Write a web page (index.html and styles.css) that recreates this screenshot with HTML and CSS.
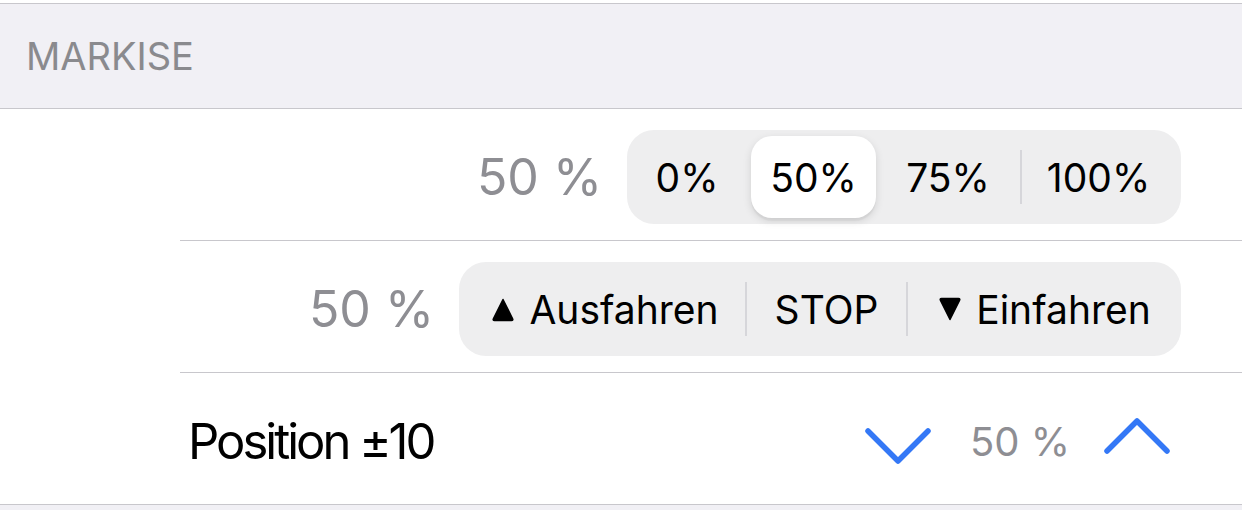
FILE: index.html
```html
<!DOCTYPE html>
<html lang="de">
<head>
<meta charset="utf-8">
<title>Markise</title>
<link rel="stylesheet" href="styles.css">
</head>
<body>
<div class="prev"></div>
<div class="section-header">MARKISE</div>
<div class="list">
  <div class="row">
    <span class="value">50 %</span>
    <div class="seg seg-pos">
      <div class="s s-first">0%</div>
      <div class="s selected">50%</div>
      <div class="s">75%</div>
      <div class="divider"></div>
      <div class="s">100%</div>
    </div>
  </div>
  <div class="row">
    <span class="value">50 %</span>
    <div class="seg seg-move">
      <div class="s"><svg class="tri" viewBox="0 0 24 25" width="24" height="25"><path d="M12 2.5 L21.5 21.5 Q22.5 23.5 20.5 23.5 L3.5 23.5 Q1.5 23.5 2.5 21.5 Z" fill="#000" stroke="#000" stroke-width="1.5" stroke-linejoin="round"/></svg>Ausfahren</div>
      <div class="divider"></div>
      <div class="s">STOP</div>
      <div class="divider"></div>
      <div class="s"><svg class="tri tri-down" viewBox="0 0 24 25" width="24" height="25"><path d="M12 22.5 L21.5 3.5 Q22.5 1.5 20.5 1.5 L3.5 1.5 Q1.5 1.5 2.5 3.5 Z" fill="#000" stroke="#000" stroke-width="1.5" stroke-linejoin="round"/></svg>Einfahren</div>
    </div>
  </div>
  <div class="row row-last">
    <span class="label">Position ±10</span>
    <div class="stepper">
      <svg class="chev chev-down" viewBox="0 0 66 36" width="66" height="36"><polyline points="3,3 33,33 63,3" fill="none" stroke="#3478f6" stroke-width="5.5" stroke-linecap="round" stroke-linejoin="round"/></svg>
      <span class="small-value">50 %</span>
      <svg class="chev chev-up" viewBox="0 0 66 36" width="66" height="36"><polyline points="3,33 33,3 63,33" fill="none" stroke="#3478f6" stroke-width="5.5" stroke-linecap="round" stroke-linejoin="round"/></svg>
    </div>
  </div>
</div>
</body>
</html>
```

FILE: styles.css
```css
* { box-sizing: content-box; }
html, body {
  margin: 0;
  padding: 0;
}
body {
  width: 1242px;
  height: 510px;
  background: #f1f0f5;
  font-family: "Inter", "Noto Sans", sans-serif;
  overflow: hidden;
}
.prev {
  height: 3px;
  background: #ffffff;
}
.section-header {
  height: 104px;
  border-top: 1px solid #c8c7cc;
  border-bottom: 1px solid #c8c7cc;
  background: #f1f0f5;
  color: #8a8a8e;
  font-size: 38px;
  padding-left: 26px;
  display: flex;
  align-items: center;
}
.list {
  background: #ffffff;
  border-bottom: 1px solid #c8c7cc;
}
.row {
  height: 126px;
  padding-top: 5px;
  margin-left: 180px;
  padding-right: 61px;
  border-bottom: 1px solid #c8c7cc;
  display: flex;
  align-items: center;
  justify-content: flex-end;
}
.row-last {
  border-bottom: none;
  height: 126px;
  padding-right: 72px;
}
.value {
  color: #8e8e93;
  font-size: 50px;
  margin-right: 25px;
}
.seg {
  background: #eeeeef;
  border-radius: 27px;
  padding: 6px;
  display: flex;
  align-items: center;
  height: 82px;
}
.seg-pos { width: 542px; }
.seg-move { width: 710px; }
.s {
  height: 82px;
  display: flex;
  align-items: center;
  justify-content: center;
  font-size: 39px;
  color: #000;
}
.s-first { padding-right: 10px; }
.seg-pos .s:nth-child(1) { width: 108px; }
.seg-pos .s:nth-child(2) { width: 125px; }
.seg-pos .s:nth-child(3) { width: 144px; }
.seg-pos .s:nth-child(5) { width: 153px; }
.seg-move .s:nth-child(1) { width: 280px; }
.seg-move .s:nth-child(3) { width: 159px; }
.seg-move .s:nth-child(5) { width: 267px; }
.selected {
  background: #ffffff;
  border-radius: 21px;
  box-shadow: 0 3px 8px rgba(0, 0, 0, 0.12), 0 3px 1px rgba(0, 0, 0, 0.04);
}
.divider {
  width: 2px;
  height: 54px;
  background: #d6d6da;
}
.tri {
  margin-right: 14px;
}
.tri-down {
  margin-left: 6px;
}
.label {
  font-size: 49px;
  letter-spacing: -3px;
  color: #000;
  padding-left: 8px;
  margin-right: auto;
}
.stepper {
  display: flex;
  align-items: center;
}
.small-value {
  color: #8e8e93;
  font-size: 40px;
  margin: 0 34px 0 39px;
}
.chev-down { margin-top: 9px; }
.chev-up { margin-bottom: 10px; }
```
